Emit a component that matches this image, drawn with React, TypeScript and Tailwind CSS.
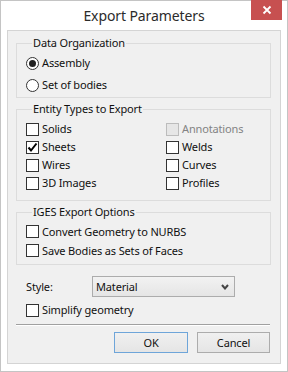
import { ReactNode } from 'react';

function Check({ checked, disabled }: { checked?: boolean; disabled?: boolean }) {
  return (
    <span
      className={`h-[13px] w-[13px] shrink-0 border flex items-center justify-center ${
        disabled ? 'border-[#bcbcbc] bg-[#e6e6e6]' : 'border-[#333333] bg-white'
      }`}
    >
      {checked && (
        <svg width="11" height="11" viewBox="0 0 11 11">
          <path d="M1.5 5.5 L4 8.5 L9.5 1.5" fill="none" stroke="#000" strokeWidth="2" />
        </svg>
      )}
    </span>
  );
}

function Radio({ checked }: { checked?: boolean }) {
  return (
    <span className="h-[13px] w-[13px] shrink-0 rounded-full border border-[#333333] bg-white flex items-center justify-center">
      {checked && <span className="h-[7px] w-[7px] rounded-full bg-[#222]" />}
    </span>
  );
}

function Option({ control, label, disabled, h = 'h-[18px]' }: { control: ReactNode; label: string; disabled?: boolean; h?: string }) {
  return (
    <div className={`flex items-center gap-[3px] ${h}`}>
      {control}
      <span className={disabled ? 'text-[#838383]' : 'text-[#111]'}>{label}</span>
    </div>
  );
}

function Group({ title, className, children }: { title: string; className?: string; children: ReactNode }) {
  return (
    <fieldset className={`border border-[#dcdcdc] w-[255px] ml-[8px] pl-[9px] ${className ?? ''}`}>
      <legend className="ml-[6px] px-[1px] leading-[16px] text-[#111]">{title}</legend>
      {children}
    </fieldset>
  );
}

export default function App() {
  return (
    <div
      className="w-[288px] h-[372px] bg-white border border-[#c4c4c4] flex flex-col text-[11px] leading-[16px] tracking-[-0.15px]"
      style={{ fontFamily: '"Noto Sans", "Open Sans", sans-serif' }}
    >
      {/* Title bar */}
      <div className="relative h-[29px] flex items-center justify-center">
        <span className="text-[14px] tracking-[-0.1px] text-[#2b2b2b] mt-[1px]">Export Parameters</span>
        <div className="absolute right-[5px] top-[-1px] w-[31px] h-[20px] bg-[#c75050] flex items-center justify-center">
          <svg width="10" height="10" viewBox="0 0 10 10">
            <path d="M1.5 1.5 L8.5 8.5 M8.5 1.5 L1.5 8.5" stroke="#fff" strokeWidth="1.8" />
          </svg>
        </div>
      </div>

      {/* Client area */}
      <div className="mx-[6px] h-[334px] border border-[#d4d4d4] bg-[#f0f0f0] flex flex-col">
        <Group title="Data Organization" className="mt-[4px] pt-[1px] pb-[1px]">
          <Option h="h-[22px]" control={<Radio checked />} label="Assembly" />
          <Option h="h-[22px]" control={<Radio />} label="Set of bodies" />
        </Group>

        <Group title="Entity Types to Export" className="mt-[3px] pt-[3px] pb-[8px]">
          <div className="grid grid-cols-[140px_1fr]">
            <Option control={<Check />} label="Solids" />
            <Option control={<Check disabled />} label="Annotations" disabled />
            <Option control={<Check checked />} label="Sheets" />
            <Option control={<Check />} label="Welds" />
            <Option control={<Check />} label="Wires" />
            <Option control={<Check />} label="Curves" />
            <Option control={<Check />} label="3D Images" />
            <Option control={<Check />} label="Profiles" />
          </div>
        </Group>

        <Group title="IGES Export Options" className="mt-[3px] pt-[2px] pb-[4px]">
          <Option h="h-[19px]" control={<Check />} label="Convert Geometry to NURBS" />
          <Option h="h-[19px]" control={<Check />} label="Save Bodies as Sets of Faces" />
        </Group>

        {/* Style */}
        <div className="mt-[11px] ml-[18px] h-[21px] flex items-center">
          <span className="w-[66px] text-[#111]">Style:</span>
          <div className="w-[143px] h-[21px] border border-[#acacac] bg-gradient-to-b from-[#f2f2f2] to-[#e5e5e5] flex items-center justify-between pl-[3px] pr-[5px]">
            <span className="text-[#111]">Material</span>
            <svg width="8" height="6" viewBox="0 0 8 6">
              <path d="M1 1 L4 4.5 L7 1" fill="none" stroke="#444" strokeWidth="2" />
            </svg>
          </div>
        </div>

        <div className="mt-[4px] ml-[18px]">
          <Option control={<Check />} label="Simplify geometry" />
        </div>

        <div className="mt-[5px] ml-[8px] w-[254px] h-[2px] border-t border-[#a0a0a0] border-b border-b-white" />

        <div className="mt-[6px] flex justify-end gap-[9px] pr-[10px]">
          <button className="w-[74px] h-[21px] border border-[#6ea5d9] bg-gradient-to-b from-[#f0f0f0] to-[#e5e5e5] text-[#111] leading-none">
            OK
          </button>
          <button className="w-[73px] h-[21px] border border-[#acacac] bg-gradient-to-b from-[#f0f0f0] to-[#e5e5e5] text-[#111] leading-none">
            Cancel
          </button>
        </div>
      </div>
    </div>
  );
}
